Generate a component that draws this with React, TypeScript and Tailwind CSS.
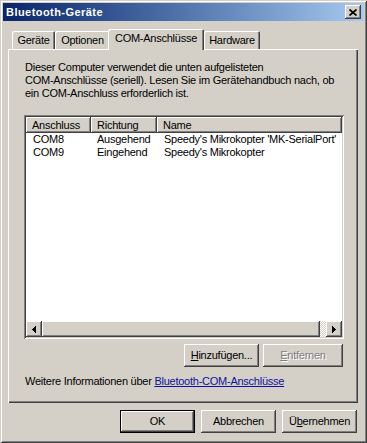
import React from "react";

const raised =
  "shadow-[inset_-1px_-1px_#404040,inset_1px_1px_#ffffff,inset_-2px_-2px_#808080,inset_2px_2px_#d4d0c8]";
const sunken =
  "shadow-[inset_1px_1px_#808080,inset_-1px_-1px_#ffffff,inset_2px_2px_#404040,inset_-2px_-2px_#d4d0c8]";
const headerCell =
  "shadow-[inset_-1px_-1px_#404040,inset_1px_1px_#ffffff,inset_-2px_-2px_#808080]";

function Btn({
  children,
  w,
  disabled,
  def,
}: {
  children: React.ReactNode;
  w: string;
  disabled?: boolean;
  def?: boolean;
}) {
  if (def) {
    return (
      <div className={`${w} h-[23px] border border-black bg-[#d4d0c8]`}>
        <div className={`w-full h-full flex items-center justify-center ${raised}`}>{children}</div>
      </div>
    );
  }
  return (
    <div
      className={`${w} h-[23px] bg-[#d4d0c8] flex items-center justify-center ${raised} ${
        disabled ? "text-[#808080] [text-shadow:1px_1px_0_#ffffff]" : "text-black"
      }`}
    >
      {children}
    </div>
  );
}

function Tab({ label, w, selected }: { label: string; w: string; selected?: boolean }) {
  if (selected) {
    return (
      <div
        className={`${w} h-[21px] -ml-[2px] -mb-[1px] relative z-10 bg-[#d4d0c8] rounded-t-[2px] flex justify-center pt-[3px] shadow-[inset_1px_1px_#ffffff,inset_-1px_0_#404040,inset_-2px_0_#808080]`}
      >
        {label}
      </div>
    );
  }
  return (
    <div
      className={`${w} h-[18px] bg-[#d4d0c8] rounded-t-[2px] flex justify-center pt-[3px] shadow-[inset_1px_1px_#ffffff,inset_-1px_0_#404040,inset_-2px_0_#808080]`}
    >
      {label}
    </div>
  );
}

function ArrowBtn({ dir }: { dir: "left" | "right" }) {
  return (
    <div className={`w-[16px] h-[16px] bg-[#d4d0c8] flex items-center justify-center ${raised}`}>
      <svg width="4" height="7" viewBox="0 0 4 7" shapeRendering="crispEdges">
        {dir === "left" ? (
          <polygon points="4,0 4,7 0,3.5" fill="#000" />
        ) : (
          <polygon points="0,0 0,7 4,3.5" fill="#000" />
        )}
      </svg>
    </div>
  );
}

export default function App() {
  const rows = [
    ["COM8", "Ausgehend", "Speedy's Mikrokopter 'MK-SerialPort'"],
    ["COM9", "Eingehend", "Speedy's Mikrokopter"],
  ];
  return (
    <div
      className="w-[367px] h-[443px] bg-[#d4d0c8] text-black text-[11px] leading-[13px] tracking-[-0.25px] font-['Liberation_Sans',Arial,sans-serif] shadow-[inset_1px_1px_#d4d0c8,inset_-1px_-1px_#404040,inset_2px_2px_#ffffff,inset_-2px_-2px_#808080] p-[3px] flex flex-col"
    >
      {/* Title bar */}
      <div className="h-[18px] flex items-center justify-between bg-linear-to-r from-[#0a246a] to-[#a6caf0] pl-[3px] pr-[3px]">
        <span className="text-white font-bold tracking-[0.45px]">Bluetooth-Geräte</span>
        <div className={`w-[16px] h-[14px] bg-[#d4d0c8] flex items-center justify-center ${raised}`}>
          <svg width="8" height="7" viewBox="0 0 8 7">
            <path d="M0.5 0.5 L7.5 6.5 M7.5 0.5 L0.5 6.5" stroke="#000" strokeWidth="1.7" />
          </svg>
        </div>
      </div>

      {/* Tabs + panel */}
      <div className="mt-[8px] pl-[5px] pr-[6px]">
        <div className="h-[20px] flex items-end pl-[4px]">
          <Tab label="Geräte" w="w-[43px]" />
          <Tab label="Optionen" w="w-[55px]" />
          <Tab label="COM-Anschlüsse" w="w-[96px]" selected />
          <Tab label="Hardware" w="w-[56px]" />
        </div>
        <div
          className="h-[354px] bg-[#d4d0c8] pt-[12px] pl-[16px] shadow-[inset_1px_1px_#ffffff,inset_-1px_-1px_#404040,inset_-2px_-2px_#808080]"
        >
          <p className="whitespace-nowrap pl-[1px]">
            Dieser Computer verwendet die unten aufgelisteten
            <br />
            COM-Anschlüsse (seriell). Lesen Sie im Gerätehandbuch nach, ob
            <br />
            ein COM-Anschluss erforderlich ist.
          </p>

          {/* List view */}
          <div className={`mt-[15px] w-[320px] h-[224px] bg-white p-[2px] flex flex-col ${sunken}`}>
            <div className="h-[16px] flex">
              <div className={`w-[65px] bg-[#d4d0c8] pl-[6px] flex items-center ${headerCell}`}>Anschluss</div>
              <div className={`w-[66px] bg-[#d4d0c8] pl-[6px] flex items-center ${headerCell}`}>Richtung</div>
              <div className={`flex-1 bg-[#d4d0c8] pl-[6px] flex items-center ${headerCell}`}>Name</div>
            </div>
            {rows.map((r) => (
              <div key={r[0]} className="h-[13px] flex whitespace-nowrap">
                <div className="w-[65px] pl-[7px]">{r[0]}</div>
                <div className="w-[66px] pl-[6px]">{r[1]}</div>
                <div className="flex-1 pl-[7px]">{r[2]}</div>
              </div>
            ))}
            <div className="flex-1" />
            <div className="h-[16px] flex">
              <ArrowBtn dir="left" />
              <div className={`w-[278px] h-[16px] bg-[#d4d0c8] ${raised}`} />
              <div className="flex-1 bg-[repeating-conic-gradient(#ffffff_0%_25%,#d4d0c8_0%_50%)] bg-[length:2px_2px]" />
              <ArrowBtn dir="right" />
            </div>
          </div>

          {/* Add / remove */}
          <div className="mt-[5px] w-[319px] flex justify-end gap-[4px]">
            <Btn w="w-[75px]">
              <span>
                <span className="underline">H</span>inzufügen...
              </span>
            </Btn>
            <Btn w="w-[80px]" disabled>
              <span>
                <span className="underline">E</span>ntfernen
              </span>
            </Btn>
          </div>

          <p className="mt-[8px] pl-[1px] whitespace-nowrap">
            Weitere Informationen über{" "}
            <span className="text-[#10109c] underline">Bluetooth-COM-Anschlüsse</span>
          </p>
        </div>
      </div>

      {/* Dialog buttons */}
      <div className="mt-[7px] flex justify-end gap-[6px] pr-[7px]">
        <Btn w="w-[75px]" def>
          OK
        </Btn>
        <Btn w="w-[75px]">Abbrechen</Btn>
        <Btn w="w-[75px]">
          <span>
            Ü<span className="underline">b</span>ernehmen
          </span>
        </Btn>
      </div>
    </div>
  );
}
